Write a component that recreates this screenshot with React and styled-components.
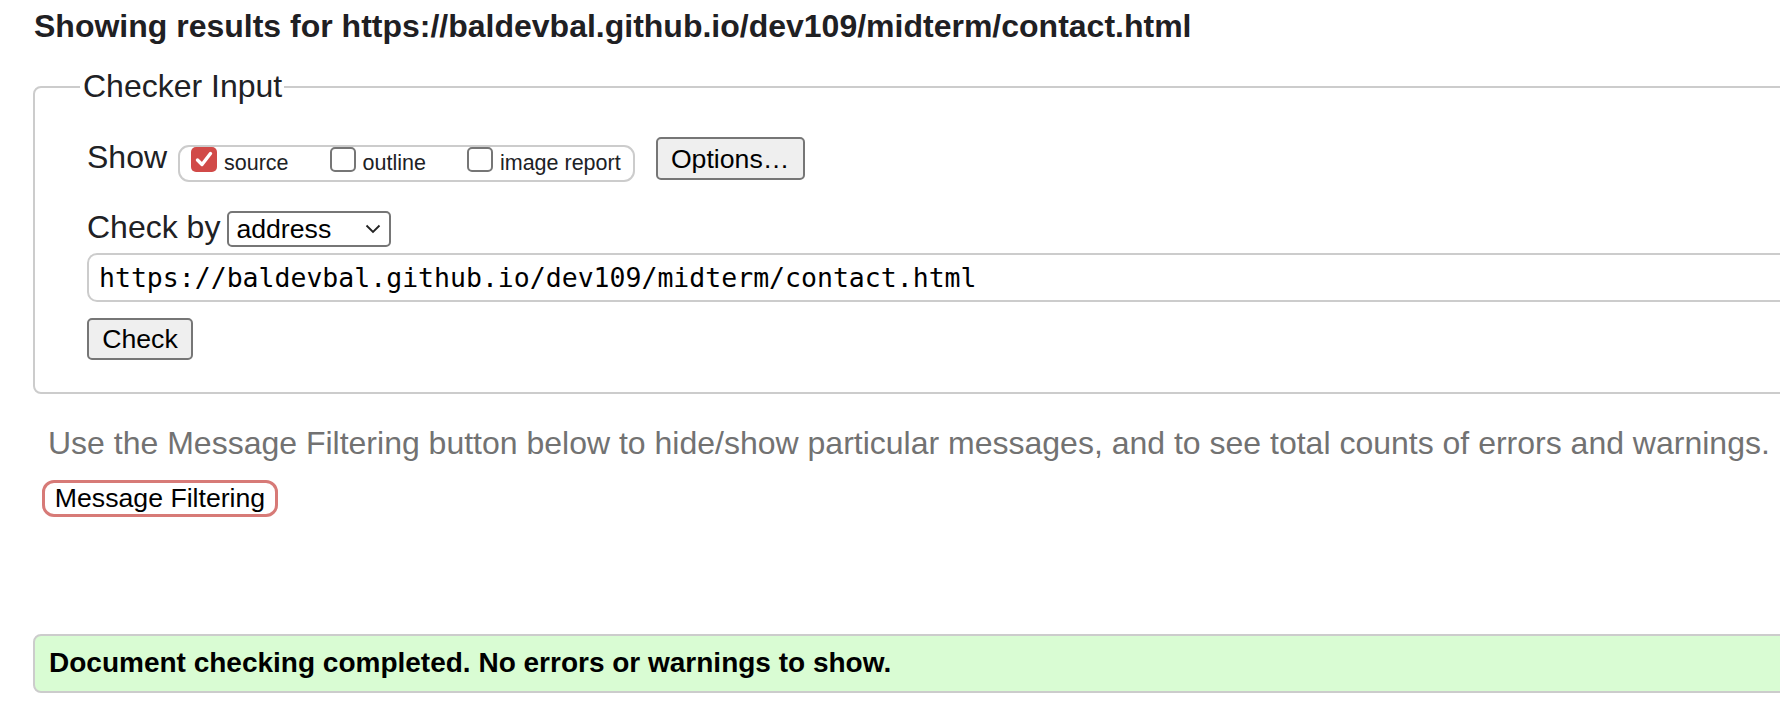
import React from 'react'
import styled, { createGlobalStyle } from 'styled-components'

const GlobalStyle = createGlobalStyle`
  html, body {
    margin: 0;
    padding: 0;
    overflow: hidden;
    background: #ffffff;
  }
  body {
    font-family: "Liberation Sans", Arial, Helvetica, sans-serif;
    color: #202124;
  }
`

const Page = styled.div`
  width: 1900px;
  padding: 6px 0 0 33px;
  box-sizing: border-box;
`

const Heading = styled.h2`
  margin: 0 0 0 1px;
  font-size: 32px;
  line-height: 40px;
  font-weight: bold;
  color: #1f2023;
`

const Fieldset = styled.fieldset`
  margin: 22px 0 0 0;
  padding: 32px 0 32px 52px;
  border: 2px solid #cccccc;
  border-radius: 8px;
  min-width: 0;
`

const Legend = styled.legend`
  margin-left: -7px;
  padding: 0 2px 0 3px;
  font-size: 32px;
  line-height: 37px;
  color: #202124;
`

const Row = styled.div`
  display: flex;
  align-items: baseline;
  margin-top: ${props => props.gap || 0}px;
`

const Label = styled.span`
  font-size: 32px;
  line-height: 37px;
  margin-right: ${props => props.space || 0}px;
`

const Pill = styled.div`
  display: flex;
  align-items: flex-start;
  height: 37px;
  box-sizing: border-box;
  border: 2px solid #cccccc;
  border-radius: 11px;
  padding: 0 12px 0 11px;
  margin-right: 21px;
`

const CheckItem = styled.label`
  display: flex;
  align-items: flex-start;
  margin-right: ${props => props.last ? 0 : 41}px;
`

const CheckText = styled.span`
  font-size: 21.5px;
  line-height: 33px;
  color: #202124;
`

const Box = styled.span`
  display: flex;
  align-items: center;
  justify-content: center;
  flex: none;
  width: 26px;
  height: 25px;
  box-sizing: border-box;
  margin-right: 7px;
  border-radius: 5px;
  border: ${props => props.checked ? 'none' : '2px solid #767676'};
  background: ${props => props.checked ? '#d14a48' : '#ffffff'};
`

const Button = styled.button`
  font-family: "Liberation Sans", Arial, Helvetica, sans-serif;
  font-size: 26.67px;
  color: #000000;
  background: #efefef;
  border: 2px solid #767676;
  border-radius: 5px;
  height: ${props => props.h || 42}px;
  width: ${props => props.w}px;
  padding: 0;
  line-height: 30px;
`

const Select = styled.div`
  display: flex;
  align-items: center;
  justify-content: space-between;
  width: 164px;
  height: 36px;
  box-sizing: border-box;
  border: 2px solid #767676;
  border-radius: 5px;
  padding: 0 8px 0 7px;
  font-size: 26.67px;
  line-height: 30px;
  color: #000000;
`

const UrlField = styled.input`
  display: block;
  width: 100%;
  height: 49px;
  box-sizing: border-box;
  margin-top: 6px;
  border: 2px solid #cccccc;
  border-radius: 10px;
  padding: 0 10px;
  font-family: "DejaVu Sans Mono", "Liberation Mono", monospace;
  font-size: 26.5px;
  color: #000000;
  outline: none;
`

const CheckWrap = styled.div`
  margin-top: 16px;
`

const Hint = styled.p`
  margin: 31px 0 0 15px;
  font-size: 32px;
  line-height: 37px;
  color: #727272;
  white-space: nowrap;
`

const FilterButton = styled.button`
  display: block;
  margin: 18px 0 0 9px;
  width: 236px;
  height: 37px;
  padding: 0;
  background: #ffffff;
  border: 3px solid #d77a77;
  border-radius: 12px;
  font-family: "Liberation Sans", Arial, Helvetica, sans-serif;
  font-size: 26.67px;
  line-height: 30px;
  color: #000000;
`

const Success = styled.div`
  display: flex;
  align-items: center;
  margin-top: 117px;
  height: 59px;
  box-sizing: border-box;
  padding-left: 14px;
  background: #d9fcd3;
  border: 2px solid #cccccc;
  border-radius: 8px;
  font-size: 28px;
  font-weight: bold;
  color: #000000;
`

const Tick = () => (
  <svg width="18" height="17" viewBox="0 0 18 17">
    <path d="M2.5 9 L7 13.5 L15.5 2.5" fill="none" stroke="#ffffff" strokeWidth="3.4" strokeLinecap="round" strokeLinejoin="round" />
  </svg>
)

const Chevron = () => (
  <svg width="16" height="10" viewBox="0 0 16 10">
    <path d="M1.5 1.5 L8 8 L14.5 1.5" fill="none" stroke="#222" strokeWidth="1.8" />
  </svg>
)

const App = () => {
  const url = 'https://baldevbal.github.io/dev109/midterm/contact.html'
  return (
    <React.Fragment>
      <GlobalStyle />
      <Page>
        <Heading>Showing results for {url}</Heading>
        <Fieldset>
          <Legend>Checker Input</Legend>
          <Row>
            <Label space={11}>Show</Label>
            <Pill>
              <CheckItem>
                <Box checked><Tick /></Box>
                <CheckText>source</CheckText>
              </CheckItem>
              <CheckItem>
                <Box />
                <CheckText>outline</CheckText>
              </CheckItem>
              <CheckItem last>
                <Box />
                <CheckText>image report</CheckText>
              </CheckItem>
            </Pill>
            <Button w={149} h={43}>Options…</Button>
          </Row>
          <Row gap={27}>
            <Label space={7}>Check by</Label>
            <Select>
              <span>address</span>
              <Chevron />
            </Select>
          </Row>
          <UrlField readOnly defaultValue={url} />
          <CheckWrap>
            <Button w={106}>Check</Button>
          </CheckWrap>
        </Fieldset>
        <Hint>Use the Message Filtering button below to hide/show particular messages, and to see total counts of errors and warnings.</Hint>
        <FilterButton>Message Filtering</FilterButton>
        <Success>Document checking completed. No errors or warnings to show.</Success>
      </Page>
    </React.Fragment>
  )
}

export default App
